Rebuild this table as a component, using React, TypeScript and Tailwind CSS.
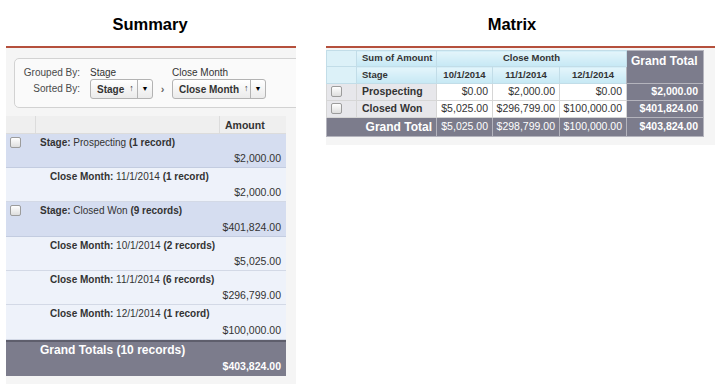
const groups = [
  { kind: "stage", label: "Stage:", value: "Prospecting", count: "(1 record)", amount: "$2,000.00", h: "h-[34px]" },
  { kind: "month", label: "Close Month:", value: "11/1/2014", count: "(1 record)", amount: "$2,000.00", h: "h-[34px]" },
  { kind: "stage", label: "Stage:", value: "Closed Won", count: "(9 records)", amount: "$401,824.00", h: "h-[35px]" },
  { kind: "month", label: "Close Month:", value: "10/1/2014", count: "(2 records)", amount: "$5,025.00", h: "h-[34px]" },
  { kind: "month", label: "Close Month:", value: "11/1/2014", count: "(6 records)", amount: "$296,799.00", h: "h-[34px]" },
  { kind: "month", label: "Close Month:", value: "12/1/2014", count: "(1 record)", amount: "$100,000.00", h: "h-[35px]" },
];

const matrixRows = [
  { stage: "Prospecting", values: ["$0.00", "$2,000.00", "$0.00"], total: "$2,000.00" },
  { stage: "Closed Won", values: ["$5,025.00", "$296,799.00", "$100,000.00"], total: "$401,824.00" },
];

function Checkbox() {
  return (
    <span className="inline-block w-[11px] h-[11px] rounded-[2px] border border-[#9c9c9c] bg-linear-to-b from-white to-[#dedede]" />
  );
}

function Picker({ text, width }: { text: string; width: string }) {
  return (
    <div className={`${width} h-[20px] flex border border-[#b3b3b3] rounded-[3px] bg-linear-to-b from-white to-[#ebebeb]`}>
      <div className="flex-1 flex items-center pl-[6px] text-[10px] font-bold text-[#333]">
        {text}
        <span className="ml-[5px] text-[9px] font-normal">↑</span>
      </div>
      <div className="w-[15px] border-l border-[#b3b3b3] flex items-center justify-center text-[7px] text-black">▼</div>
    </div>
  );
}

function Summary() {
  return (
    <div className="w-[300px] flex flex-col">
      <div className="h-[46px] flex items-center justify-center text-[16.5px] font-bold text-black pt-[2px]">Summary</div>
      <div className="ml-[6px] w-[290px] border-t-2 border-[#b5503c] bg-[#f5f5f5] overflow-hidden pb-[8px]">
        {/* filters */}
        <div className="mt-[10px] ml-[8px] w-[300px] h-[50px] border border-[#d2d2d2] rounded-[5px] bg-[#fafafa] pt-[8px] flex text-[10px]">
          <div className="w-[65px] text-right text-[#4a4a4a]">
            <div className="h-[12px] leading-[12px]">Grouped By:</div>
            <div className="h-[20px] leading-[20px]">Sorted By:</div>
          </div>
          <div className="ml-[10px] w-[63px]">
            <div className="h-[12px] leading-[12px] text-[#333]">Stage</div>
            <Picker text="Stage" width="w-[63px]" />
          </div>
          <div className="w-[19px] pt-[12px] h-[32px] flex items-center justify-center text-[11px] font-bold text-[#666]">›</div>
          <div className="w-[94px]">
            <div className="h-[12px] leading-[12px] text-[#333]">Close Month</div>
            <Picker text="Close Month" width="w-[94px]" />
          </div>
        </div>

        {/* table */}
        <div className="mt-[8px] w-[280px] text-[10px] text-[#333]">
          <div className="h-[18px] flex bg-[#efefef] border-b border-[#dcdcdc]">
            <div className="w-[30px] border-r border-[#dcdcdc]" />
            <div className="w-[184px] border-r border-[#dcdcdc]" />
            <div className="flex-1 pl-[5px] leading-[18px] font-bold text-[10.5px]">Amount</div>
          </div>
          {groups.map((g, i) => (
            <div
              key={i}
              className={`${g.h} flex flex-col border-b ${
                g.kind === "stage" ? "bg-[#d5ddf0] border-[#c3cce0]" : "bg-[#eef2fa] border-[#d3d9e6]"
              }`}
            >
              <div className="h-[17px] flex items-center">
                <div className="w-[30px] pl-[4px] flex items-center">{g.kind === "stage" && <Checkbox />}</div>
                <div className={g.kind === "stage" ? "pl-[4px]" : "pl-[14px]"}>
                  <span className="font-bold">{g.label}</span> <span>{g.value}</span>{" "}
                  <span className="font-bold">{g.count}</span>
                </div>
              </div>
              <div className="h-[17px] flex items-center justify-end pr-[5px] text-[10.5px]">{g.amount}</div>
            </div>
          ))}
          <div className="h-[36px] bg-[#7c7c8c] border-t-2 border-[#5e5e6c] text-white flex flex-col">
            <div className="h-[16px] flex items-center pl-[34px] text-[12px] font-bold">Grand Totals (10 records)</div>
            <div className="h-[18px] flex items-center justify-end pr-[5px] text-[10.5px] font-bold">$403,824.00</div>
          </div>
        </div>
      </div>
    </div>
  );
}

function Matrix() {
  const hdr = "bg-linear-to-b from-[#e4f5fb] to-[#c6e8f4] border border-[#c2dde8]";
  const cell = "border border-[#d6d6d6]";
  const dark = "bg-[#7c7c8c] border border-[#b4b4bd] text-white";
  return (
    <div className="w-[424px] flex flex-col">
      <div className="h-[46px] flex items-center justify-center text-[16.5px] font-bold text-black pt-[2px]">Matrix</div>
      <div className="ml-[26px] w-[389px] border-t-2 border-[#b5503c] bg-[#f5f5f5] pt-[2px] pb-[8px]">
        <table className="table-fixed border-collapse w-[377px] text-[#333]">
          <colgroup>
            <col className="w-[30px]" />
            <col className="w-[80px]" />
            <col className="w-[56px]" />
            <col className="w-[67px]" />
            <col className="w-[67px]" />
            <col className="w-[77px]" />
          </colgroup>
          <tbody>
            <tr className="h-[16px] text-[9.5px] font-bold">
              <td className="bg-[#dcf1f8] border border-[#c2dde8]" />
              <td className={`${hdr} from-[#d6eff8] to-[#bfe5f3] pl-[5px]`}>Sum of Amount</td>
              <td colSpan={3} className={`${hdr} text-center`}>Close Month</td>
              <td rowSpan={2} className={`${dark} align-top pl-[4px] pt-[1px] text-[12px] font-bold`}>Grand Total</td>
            </tr>
            <tr className="h-[17px] text-[9.5px] font-bold">
              <td className="bg-[#dcf1f8] border border-[#c2dde8]" />
              <td className={`${hdr} from-[#d6eff8] to-[#bfe5f3] pl-[5px]`}>Stage</td>
              <td className={`${hdr} text-center`}>10/1/2014</td>
              <td className={`${hdr} text-center`}>11/1/2014</td>
              <td className={`${hdr} text-center`}>12/1/2014</td>
            </tr>
            {matrixRows.map((r) => (
              <tr key={r.stage} className="h-[17px] text-[10.5px]">
                <td className="bg-[#e7e7eb] border border-[#d6d6d6] pl-[4px] leading-none">
                  <Checkbox />
                </td>
                <td className="bg-[#e7e7eb] border border-[#d6d6d6] pl-[5px] font-bold">{r.stage}</td>
                {r.values.map((v, j) => (
                  <td key={j} className={`${cell} bg-white text-right pr-[4px]`}>{v}</td>
                ))}
                <td className={`${dark} text-right pr-[5px] font-bold`}>{r.total}</td>
              </tr>
            ))}
            <tr className="h-[17px] text-[10.5px]">
              <td colSpan={2} className={`${dark} text-right pr-[4px] text-[12px] font-bold`}>Grand Total</td>
              <td className={`${dark} text-right pr-[4px]`}>$5,025.00</td>
              <td className={`${dark} text-right pr-[4px]`}>$298,799.00</td>
              <td className={`${dark} text-right pr-[4px]`}>$100,000.00</td>
              <td className={`${dark} text-right pr-[5px] font-bold`}>$403,824.00</td>
            </tr>
          </tbody>
        </table>
      </div>
    </div>
  );
}

export default function App() {
  return (
    <div className="w-[724px] h-[388px] bg-white flex overflow-hidden font-['Liberation_Sans',Arial,sans-serif]">
      <Summary />
      <Matrix />
    </div>
  );
}
